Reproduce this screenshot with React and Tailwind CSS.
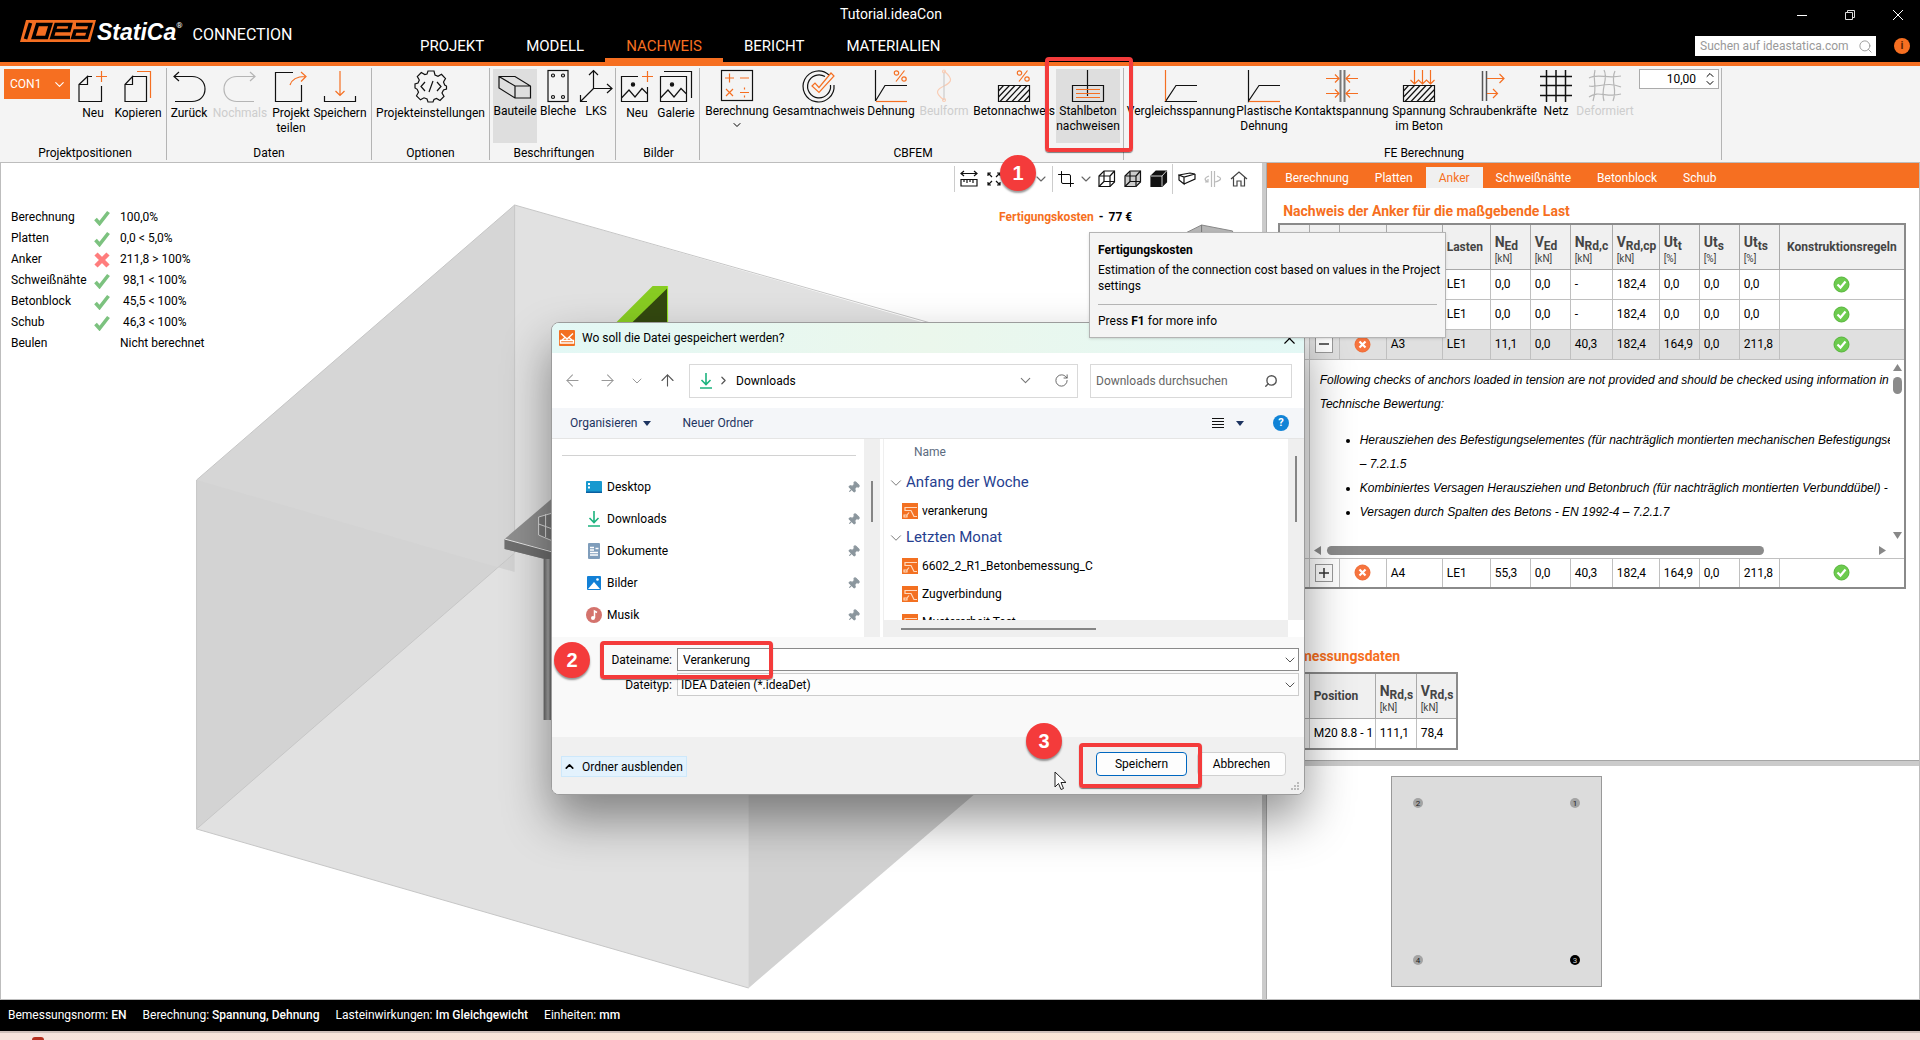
import { useState } from 'react'
import { ArrowLeft, ArrowRight, ArrowUp, ChevronDown, ChevronRight, ChevronUp, Crop, Pin, RotateCw, Search, X } from 'lucide-react'

const K = '#111'
const O = '#f56f22'
const G = '#b5b5b5'

function Svg({ children, color = K, size = 32, className = '' }) {
  return (
    <svg
      width={size}
      height={size}
      viewBox="0 0 32 32"
      fill="none"
      stroke={color}
      strokeWidth="1.2"
      className={`shrink-0 overflow-visible ${className}`}
      aria-hidden="true"
    >
      {children}
    </svg>
  )
}

const Percent = ({ x }) => (
  <g stroke={O} transform={`translate(${x} 0)`}>
    <circle cx="2.5" cy="3" r="2.2" />
    <circle cx="10" cy="9" r="2.2" />
    <path d="M10.500 .5L2 11.500" />
  </g>
)

const Hatch = () => (
  <g>
    <path d="M.5 15.500h31v16H.5z" />
    <path d="M.5 21l5-5.500M.5 27l11-11.500M2 31.500l15-16M8 31.500l15-16M14 31.500l15-16M20 31.500l11.500-12M26 31.500l5.500-6" />
  </g>
)

const icons = {
  newFile: (
    <Svg>
      <path d="M2 14.500L10.500 6.500V14.500H2V31.500H24.500V16M10.500 6.500H15" />
      <path d="M19 6.500H30M24.500 1V12" stroke={O} />
    </Svg>
  ),
  copy: (
    <Svg>
      <path d="M3 14.500L10.500 6.500V14.500H3V31.500H24.500V6.500H10.500" />
      <path d="M15 1.500H28.500V28" stroke={O} />
    </Svg>
  ),
  undo: (
    <Svg>
      <path d="M1 6.500H19C27 6.500 32 12 32 19S27 31.500 19 31.500H2M6 2L1 6.500L6 11" />
    </Svg>
  ),
  redo: (
    <Svg color={G}>
      <path d="M31 6.500H13C5 6.500 0 12 0 19S5 31.500 13 31.500H30M26 2L31 6.500L26 11" />
    </Svg>
  ),
  share: (
    <Svg>
      <path d="M18 2.500H.5V31.500H26.500V15" />
      <path d="M15 15C17 9 22 6.500 30 6.500M26 2L31 6.500L26 11.500" stroke={O} />
    </Svg>
  ),
  save: (
    <Svg>
      <path d="M.5 26V31.500H31.500V26" />
      <path d="M16 1V25M11.500 21L16 25.500L20.500 21" stroke={O} />
    </Svg>
  ),
  gear: (
    <Svg>
      <path d="M13 1h6l1 4 3 1.300 3.500-2 4 4.200-2 3.500 1.200 3L31.500 16v3l-3 1-1.500 3 2 3.500-4 4-3.500-2-2.500 1L18 32h-5l-1-3-3-1.200-3.500 2-4-4 2-3.500-1.300-3L0 18v-4l3-1 1.300-3-2-3.500 4-4 3.500 2L12 4z" />
      <path d="M10 12L6 16.500L10 21M22 12L26 16.500L22 21M18 11L14 22" />
    </Svg>
  ),
  beam: (
    <Svg>
      <path d="M0 6.500H16L31.500 16V28H16L0 18ZM0 6.500L16 16H31.500M16 16V28" />
    </Svg>
  ),
  plate: (
    <Svg>
      <rect x="6" y=".5" width="20" height="31" />
      <circle cx="11" cy="5.500" r="1.500" />
      <circle cx="21" cy="5.500" r="1.500" />
      <circle cx="11" cy="27" r="1.500" />
      <circle cx="21" cy="27" r="1.500" />
    </Svg>
  ),
  axes: (
    <Svg>
      <path d="M13.500 0V18.500H32M13.500 18.500L.5 31.500M9 5L13.500 .5L18 5M27 14L32 18.500L27 23M.5 25V31.500H7" />
    </Svg>
  ),
  imageNew: (
    <Svg>
      <path d="M17 6.500H.5V31.500H26.500V17M.5 28L8 20L14 27L21 18.500L26.500 24" />
      <circle cx="12" cy="14.500" r="1.600" fill={K} />
      <path d="M21 6.500H32M26.500 1V12" stroke={O} />
    </Svg>
  ),
  gallery: (
    <Svg>
      <path d="M.5 6.500H26.500V31.500H.5ZM.5 28L8 20L14 27L21 18.500L26.500 24M4 1.500H31.500V28" />
      <circle cx="12" cy="14.500" r="1.600" fill={K} />
    </Svg>
  ),
  calc: (
    <Svg>
      <rect x=".5" y=".5" width="31" height="30" />
      <path
        d="M4 8H13M8.500 3.500V12.500M19 8H28M5 19L12 26M12 19L5 26M19 22.500H28M23.500 17.500V19.500M23.500 25.500V27.500"
        stroke={O}
      />
    </Svg>
  ),
  overall: (
    <Svg>
      <path d="M26 5A15.500 15.500 0 1 0 31 15M22 6.500A11.500 11.500 0 1 0 27.500 15" />
      <path d="M9 16L12 13L16 17.500L28 3L31 6L16 22.500Z" stroke={O} />
    </Svg>
  ),
  strain: (
    <Svg>
      <path d="M.5 0V31M.5 31L10 15.500H32" />
      <path d="M1 31.500H32" stroke={O} />
      <Percent x={19} />
    </Svg>
  ),
  buckling: (
    <Svg color="#f9cdb5">
      <path d="M16 1C27 10 22 13 16 16S5 22 16 30" />
      <path d="M16 2V30" stroke="#ccc" />
      <circle cx="16" cy="1.500" r="1.500" />
      <circle cx="16" cy="30" r="1.500" />
    </Svg>
  ),
  concrete: (
    <Svg>
      <Hatch />
      <Percent x={19} />
    </Svg>
  ),
  reinforced: (
    <Svg>
      <path d="M.5 15.500H31.500V31.500H.5ZM15.500 0V26" />
      <path d="M4 19.500H28M4 23.500H28M4 27.500H28" stroke={O} />
    </Svg>
  ),
  stress: (
    <Svg>
      <path d="M32 31.500H.5L11 15.500H32" />
      <path d="M.5 0V31" stroke={O} />
    </Svg>
  ),
  plastic: (
    <Svg>
      <path d="M.5 0V31L11 15.500H32" />
      <path d="M1 31.500H32" stroke={O} />
    </Svg>
  ),
  contact: (
    <Svg>
      <path d="M14.500 0V32M18.500 0V32" stroke="#777" strokeWidth="2" />
      <path
        d="M0 8.500H13M9 4.500L13 8.500L9 12.500M0 23.500H13M9 19.500L13 23.500L9 27.500M32 8.500H20M24 4.500L20 8.500L24 12.500M32 23.500H20M24 19.500L20 23.500L24 27.500"
        stroke={O}
      />
    </Svg>
  ),
  concreteStress: (
    <Svg>
      <Hatch />
      <path d="M11.500 0V14M19.500 0V14M27.500 0V14M7.500 10L11.500 14L15.500 10L19.500 14L23.500 10L27.500 14L31.500 10" stroke={O} />
    </Svg>
  ),
  bolt: (
    <Svg>
      <path d="M5.500 1V31M9.500 1V31" stroke="#555" strokeWidth="1.500" />
      <path d="M10 8.500H27M22.500 4L27 8.500L22.500 13M10 23.500H20M16 19L20.500 23.500L16 28" stroke={O} />
    </Svg>
  ),
  mesh: (
    <Svg>
      <path d="M6.500 0V32M16 0V32M25.500 0V32M0 6.500H32M0 15.500H32M0 25.500H32" strokeWidth="1.500" />
    </Svg>
  ),
  deformed: (
    <Svg color={G}>
      <path d="M6 0C3 10 9 14 4 31M15 0C20 9 11 18 15 31M26 1C21 12 29 18 24 31M0 8C8 3 18 9 32 6M0 16C9 18 18 11 32 17M0 27C9 20 18 28 32 24" />
    </Svg>
  ),
}

const groups = [
  {
    name: 'Projektpositionen',
    className: 'w-[167px] pl-1',
    low: true,
    items: [
      { label: 'Neu', icon: 'newFile', w: 'w-[46px]' },
      { label: 'Kopieren', icon: 'copy', w: 'w-[44px]' },
    ],
  },
  {
    name: 'Daten',
    className: 'w-[205px]',
    low: true,
    items: [
      { label: 'Zurück', icon: 'undo', w: 'w-[44px]' },
      { label: 'Nochmals', icon: 'redo', w: 'w-[58px]', disabled: true },
      { label: 'Projekt teilen', icon: 'share', w: 'w-[44px]' },
      { label: 'Speichern', icon: 'save', w: 'w-[54px]' },
    ],
  },
  {
    name: 'Optionen',
    className: 'w-[118px]',
    low: true,
    items: [{ label: 'Projekteinstellungen', icon: 'gear', w: 'w-[117px]' }],
  },
  {
    name: 'Beschriftungen',
    className: 'w-[126px] pl-[3px]',
    items: [
      { label: 'Bauteile', icon: 'beam', w: 'w-[44px]', active: true },
      { label: 'Bleche', icon: 'plate', w: 'w-[42px]' },
      { label: 'LKS', icon: 'axes', w: 'w-[34px]' },
    ],
  },
  {
    name: 'Bilder',
    className: 'w-[84px] pl-[2px]',
    low: true,
    items: [
      { label: 'Neu', icon: 'imageNew', w: 'w-[38px]' },
      { label: 'Galerie', icon: 'gallery', w: 'w-[40px]' },
    ],
  },
  {
    name: 'CBFEM',
    className: 'w-[424px] pl-[3px]',
    items: [
      { label: 'Berechnung', icon: 'calc', w: 'w-[68px]', menu: true },
      { label: 'Gesamtnachweis', icon: 'overall', w: 'w-[95px]' },
      { label: 'Dehnung', icon: 'strain', w: 'w-[50px]' },
      { label: 'Beulform', icon: 'buckling', w: 'w-[56px]', disabled: true },
      { label: 'Betonnachweis', icon: 'concrete', w: 'w-[84px]' },
      { label: 'Stahlbeton nachweisen', icon: 'reinforced', w: 'w-[64px]', active: true },
    ],
  },
  {
    name: 'FE Berechnung',
    className: 'w-[598px] pl-[3px]',
    spinner: true,
    items: [
      { label: 'Vergleichsspannung', icon: 'stress', w: 'w-[108px]' },
      { label: 'Plastische Dehnung', icon: 'plastic', w: 'w-[58px]' },
      { label: 'Kontaktspannung', icon: 'contact', w: 'w-[97px]' },
      { label: 'Spannung im Beton', icon: 'concreteStress', w: 'w-[58px]' },
      { label: 'Schraubenkräfte', icon: 'bolt', w: 'w-[90px]' },
      { label: 'Netz', icon: 'mesh', w: 'w-[36px]' },
      { label: 'Deformiert', icon: 'deformed', w: 'w-[62px]', disabled: true },
    ],
  },
]

const labelLines = {
  'Projekt teilen': ['Projekt', 'teilen'],
  'Stahlbeton nachweisen': ['Stahlbeton', 'nachweisen'],
  'Plastische Dehnung': ['Plastische', 'Dehnung'],
  'Spannung im Beton': ['Spannung', 'im Beton'],
}

function RibbonItem({ item, low }) {
  return (
    <button
      disabled={item.disabled}
      className={`flex h-[74px] shrink-0 flex-col items-center pt-px ${item.w} ${item.active ? 'bg-[#dedede]' : ''} ${item.disabled ? 'text-[#cdcdcd]' : ''}`}
    >
      {icons[item.icon]}
      <span className={`text-center leading-[15px] whitespace-nowrap ${low ? 'mt-1' : 'mt-[2px]'}`}>
        {(labelLines[item.label] || [item.label]).map((line) => (
          <span key={line} className="block">{line}</span>
        ))}
      </span>
      {item.menu && <ChevronDown size={12} />}
    </button>
  )
}

function Ribbon() {
  return (
    <div className="flex h-[97px] border-b border-[#bdbdbd] bg-[#f4f4f4] pt-[2px]">
      {groups.map((g) => (
        <div key={g.name} className={`flex h-[92px] shrink-0 flex-col border-r border-[#b4b4b4] ${g.className}`}>
          <div className="flex flex-1 items-start pt-px">
            {g.name === 'Projektpositionen' && (
              <button className="flex h-[30px] w-[66px] shrink-0 items-center justify-between bg-[#f66f21] pr-[3px] pl-[6px] text-white">
                CON1 <ChevronDown size={15} strokeWidth={1.8} />
              </button>
            )}
            {g.items.map((item) => (
              <RibbonItem key={item.label} item={item} low={g.low} />
            ))}
            {g.spinner && (
              <div className="ml-[3px] flex h-5 w-20 items-center border border-[#ababab] bg-white pr-[2px]">
                <input aria-label="Skalierung" defaultValue="10,00" className="w-full min-w-0 pr-2 text-right outline-none" />
                <div className="flex flex-col">
                  <ChevronUp size={12} className="-mb-1" />
                  <ChevronDown size={12} />
                </div>
              </div>
            )}
          </div>
          <div className="text-center leading-[14px]">{g.name}</div>
        </div>
      ))}
    </div>
  )
}

function TopBar() {
  const [tab, setTab] = useState('NACHWEIS')
  return (
    <header className="flex h-[66px] justify-between border-b-4 border-[#f66f21] bg-black text-white">
      <div className="flex">
        <div className="flex w-[399px] items-start pt-[20px] pl-5">
          <svg width="76" height="22" viewBox="0 0 76 22" aria-label="IDEA">
            <path d="M6 0H76L70 22H0Z" fill={O} />
            <g fill="none" stroke="#000" strokeWidth="3.600">
              <path d="M10.500 3L5.500 19" />
              <path d="M17.500 4.500H30.500L26.500 17.500H13.500Z" />
              <path d="M50 17.500H32L36 4.500H50.500L49 10.500H35" />
              <path d="M56 4.500H70.500L66.500 17.500H53L55 11H68" />
            </g>
          </svg>
          <span className="pl-px font-['Liberation_Sans'] text-[23px] leading-[24px] font-bold italic">StatiCa</span>
          <span className="text-[8px] leading-[12px]">®</span>
          <span className="pt-[4px] pl-[10px] text-base leading-[22px]">CONNECTION</span>
        </div>
        <nav className="flex items-end">
          {['PROJEKT', 'MODELL', 'NACHWEIS', 'BERICHT', 'MATERIALIEN'].map((t) => (
            <button
              key={t}
              onClick={() => setTab(t)}
              className={`h-[28px] border-b-4 px-[21px] text-[15px] leading-[24px] ${t === tab ? 'border-[#f66f21] text-[#f66f21]' : 'border-transparent'}`}
            >
              {t}
            </button>
          ))}
        </nav>
      </div>
      <div className="flex flex-col items-end pr-[10px]">
        <div className="flex h-[36px] items-center gap-9 pr-[6px] pb-[6px]">
          <button aria-label="Minimieren" className="w-3">
            <svg width="12" height="12"><path d="M1 6.500H11" stroke="#fff" /></svg>
          </button>
          <button aria-label="Wiederherstellen">
            <svg width="12" height="12" fill="none" stroke="#ddd"><path d="M1.500 3.500h7v7h-7zM3.500 3V1.500h7v7H9" /></svg>
          </button>
          <button aria-label="Schließen">
            <svg width="12" height="12" stroke="#fff"><path d="M1 1l10 10M11 1L1 11" /></svg>
          </button>
        </div>
        <div className="flex items-center gap-[18px]">
          <div className="flex h-5 w-[181px] items-center bg-white pr-[3px] pl-[5px]">
            <input
              aria-label="Suchen"
              placeholder="Suchen auf ideastatica.com"
              className="w-full min-w-0 text-xs text-black outline-none placeholder:text-[#999]"
            />
            <Search size={15} color="#999" strokeWidth={1.5} className="shrink-0" />
          </div>
          <button className="flex size-4 items-center justify-center rounded-full bg-[#f66f21] text-[11px] font-bold text-[#5c2403]">i</button>
        </div>
      </div>
    </header>
  )
}

function Scene() {
  return (
    <svg viewBox="0 0 1262 836" preserveAspectRatio="xMidYMid slice" className="absolute inset-0 h-full w-full" aria-hidden="true">
      <defs>
        <linearGradient id="stud" x1="0" x2="1">
          <stop offset="0" stopColor="#666" />
          <stop offset=".5" stopColor="#aaa" />
          <stop offset="1" stopColor="#444" />
        </linearGradient>
      </defs>
      <path d="M514 42L196 317V666L514 390Z" fill="#d6d6d6" />
      <path d="M514 42L1064 192V540L748 825L196 666L514 390Z" fill="#e1e1e1" />
      <path d="M748 476V825L973 632V300Z" fill="#d2d2d2" />
      <path d="M196 317L514 409V390L196 666Z" fill="#d3d3d3" />
      <path d="M1262 0H1064V192L928 161L514 42Z" fill="#fff" />
      <path d="M973 632L1262 380V0H1064L1040 192Z" fill="#fff" />
      <path d="M196 317L514 42M514 42V390L196 666M196 317V666L748 825M514 42L930 160" fill="none" stroke="#c6c6c6" />
      <path d="M504 376L552 335V398L504 386Z" fill="#8e8e8e" />
      <path d="M504 376L552 388V398L504 386Z" fill="#6f6f6f" />
      <path d="M504 376L552 389" stroke="#e8e8e8" />
      <path d="M543 396H552V557H543Z" fill="url(#stud)" />
      <g fill="#777" stroke="#ddd">
        <path d="M538 354V372L552 378V350Z" />
        <path d="M538 361L552 366M545 351V374" />
      </g>
      <path d="M614 161L652 123H667V161Z" fill="#88cc22" />
      <path d="M630 161L667 125V161Z" fill="#33480f" />
      <path d="M667 123V161" stroke="#99ee22" />
      <path d="M1185 70L1201 62L1232 68V110H1185Z" fill="#b5b5b5" stroke="#888" />
      <path d="M1201 62V80" stroke="#777" />
    </svg>
  )
}

const checks = [
  ['Berechnung', 'ok', '100,0%'],
  ['Platten', 'ok', '0,0 < 5,0%'],
  ['Anker', 'bad', '211,8 > 100%'],
  ['Schweißnähte', 'ok', ' 98,1 < 100%'],
  ['Betonblock', 'ok', ' 45,5 < 100%'],
  ['Schub', 'ok', ' 46,3 < 100%'],
  ['Beulen', '', 'Nicht berechnet'],
]

function Cube({ fill }) {
  return (
    <svg width="18" height="18" viewBox="0 0 18 18" fill={fill} stroke="#111" strokeWidth="1.200" aria-hidden="true">
      <path d="M1 6L6 1H16.500V12L12 16.500H1Z" />
      {fill === '#111' ? <path d="M1 6H12V16.500M12 6L16.500 1" stroke="#fff" strokeWidth=".8" /> : <path d="M1 6H12V16.500M12 6L16.500 1M6 1V11.500H16.500M6 11.500L1 16.500" />}
    </svg>
  )
}

function ViewToolbar() {
  return (
    <div className="flex h-8 items-center pr-[10px]">
      <button aria-label="Messen" className="flex h-[26px] w-7 items-center justify-center border-l border-[#ccc]">
        <svg width="18" height="18" fill="none" stroke="#111" strokeWidth="1.200">
          <path d="M1 3.500H17M4 1L1 3.500L4 6M14 1L17 3.500L14 6M1 9.500H17V16H1ZM4 9.500V12M7 9.500V13M10 9.500V12M13 9.500V13" />
        </svg>
      </button>
      <button aria-label="Einpassen" className="flex w-6 justify-center">
        <svg width="14" height="14" fill="none" stroke="#111" strokeWidth="1.200">
          <path d="M1 4V1H4M1 1L5 5M13 4V1H10M13 1L9 5M1 10V13H4M1 13L5 9M13 10V13H10M13 13L9 9" />
        </svg>
      </button>
      <button aria-label="Ansicht" className="flex w-[46px] justify-end pr-[3px] text-[#666]"><ChevronDown size={16} strokeWidth={1.6} /></button>
      <button aria-label="Schnitt" className="flex h-[26px] w-[27px] items-center justify-center border-l border-[#ccc]">
        <Crop size={18} strokeWidth={1.3} />
      </button>
      <button aria-label="Schnittoptionen" className="flex w-[14px] justify-center text-[#666]"><ChevronDown size={16} strokeWidth={1.6} className="shrink-0" /></button>
      <button aria-label="Drahtmodell" className="flex w-[27px] justify-center"><Cube fill="none" /></button>
      <button aria-label="Transparent" className="flex w-[26px] justify-center"><Cube fill="#ccc" /></button>
      <button aria-label="Volumen" className="flex w-[26px] justify-center"><Cube fill="#111" /></button>
      <button aria-label="Perspektive" className="flex h-[30px] w-[28px] items-center justify-center border-l border-[#ccc]">
        <svg width="18" height="18" fill="none" stroke="#111" strokeWidth="1.200"><path d="M1 5L12 3L17 4L6 7ZM1 5V10L6 14V7M6 14L17 9V4" /></svg>
      </button>
      <button aria-label="Spiegeln" className="flex w-[26px] justify-center">
        <svg width="18" height="18" fill="none" stroke="#bbb" strokeWidth="1.200"><path d="M7.500 1V17M10.500 1V17M5 6C0 8 0 10 4 12M4 9V12H1M13 6C18 8 18 10 11 12" /></svg>
      </button>
      <button aria-label="Start" className="flex w-[26px] justify-center">
        <svg width="18" height="18" fill="none" stroke="#444" strokeWidth="1.200"><path d="M1 9L9 2L17 9M3.500 7.500V16H7V11H11V16H14.500V7.500" /></svg>
      </button>
    </div>
  )
}

function Viewport() {
  return (
    <section className="relative min-w-0 flex-1 border-l border-[#bdbdbd] bg-white">
      <Scene />
      <div className="relative flex flex-col">
        <div className="flex justify-end"><ViewToolbar /></div>
        <div className="flex items-start justify-between pt-[12px] pr-[130px] pl-[10px]">
          <table className="leading-[21px]">
            <tbody>
              {checks.map(([name, state, value]) => (
                <tr key={name} className="h-[21px]">
                  <th scope="row" className="w-[83px] p-0 text-left font-normal">{name}</th>
                  <td className="w-[26px] p-0">
                    {state === 'ok' && <svg width="16" height="16" fill="none" stroke="#7cc27f" strokeWidth="3.600"><path d="M1.500 9L5.500 13.500L14.500 2" /></svg>}
                    {state === 'bad' && <svg width="16" height="16" stroke="#ff7d7d" strokeWidth="4.500"><path d="M2 2L14 14M14 2L2 14" /></svg>}
                  </td>
                  <td className="p-0 whitespace-pre">{value}</td>
                </tr>
              ))}
            </tbody>
          </table>
          <div className="flex gap-[5px] font-bold leading-[21px]">
            <a href="#kosten" className="text-[#f66f21]">Fertigungskosten</a>
            <span>-</span>
            <span>77 €</span>
          </div>
        </div>
      </div>
    </section>
  )
}

function Status({ ok }) {
  return (
    <svg width="17" height="17" viewBox="0 0 17 17" className="mx-auto" fill="none" stroke="#fff" strokeWidth="2.200">
      <circle cx="8.500" cy="8.500" r="7.500" fill={ok ? '#6ccb4e' : '#f7743e'} stroke={ok ? '#57b53b' : '#ee6a33'} strokeWidth="1" />
      {ok ? <path d="M4.500 8.500L7.500 11.500L12.500 5.500" /> : <path d="M5.500 5.500L11.500 11.500M11.500 5.500L5.500 11.500" />}
    </svg>
  )
}

const cols = [
  ['N', 'Ed', '[kN]'],
  ['V', 'Ed', '[kN]'],
  ['N', 'Rd,c', '[kN]'],
  ['V', 'Rd,cp', '[kN]'],
  ['Ut', 't', '[%]'],
  ['Ut', 's', '[%]'],
  ['Ut', 'ts', '[%]'],
]

const anchors = [
  { name: 'A1', vals: ['0,0', '0,0', '-', '182,4', '0,0', '0,0', '0,0'], ok: true },
  { name: 'A2', vals: ['0,0', '0,0', '-', '182,4', '0,0', '0,0', '0,0'], ok: true },
  { name: 'A3', vals: ['11,1', '0,0', '40,3', '182,4', '164,9', '0,0', '211,8'], open: true },
  { name: 'A4', vals: ['55,3', '0,0', '40,3', '182,4', '164,9', '0,0', '211,8'] },
]

function ColHead({ col }) {
  const [sym, sub, unit] = col
  return (
    <th className="border border-[#a9a9a9] px-1 pt-[3px] text-left leading-[15px] whitespace-nowrap text-[#444]">
      <span className="text-sm">{sym}</span>
      <sub className="text-xs">{sub}</sub>
      <div className="pt-px text-[10px] leading-[12px] font-normal">{unit}</div>
    </th>
  )
}

function Detail() {
  return (
    <div className="flex h-[198px] flex-col bg-white">
      <div className="flex flex-1">
        <div className="h-[183px] w-0 flex-1 overflow-hidden pt-[8px] pl-[10px] font-['Liberation_Sans',sans-serif] leading-[24px] italic">
          <p className="whitespace-nowrap">Following checks of anchors loaded in tension are not provided and should be checked using information in</p>
          <p>Technische Bewertung:</p>
          <ul className="list-disc pt-3 pl-10 whitespace-nowrap">
            <li>
              Herausziehen des Befestigungselementes (für nachträglich montierten mechanischen Befestigungselementen)
              <br />– 7.2.1.5
            </li>
            <li>Kombiniertes Versagen Herausziehen und Betonbruch (für nachträglich montierten Verbunddübel) -</li>
            <li>Versagen durch Spalten des Betons - EN 1992-4 – 7.2.1.7</li>
          </ul>
        </div>
        <div className="flex w-[14px] flex-col items-center justify-between py-1">
          <div className="flex flex-col items-center gap-[6px]">
            <svg width="9" height="7" fill="#888"><path d="M0 7L4.500 0L9 7Z" /></svg>
            <div className="h-[17px] w-[9px] rounded-full bg-[#8b8b8b]" />
          </div>
          <svg width="9" height="7" fill="#888"><path d="M0 0L4.500 7L9 0Z" /></svg>
        </div>
      </div>
      <div className="flex h-[15px] items-center gap-[6px] pr-[18px] pl-1">
        <svg width="7" height="9" fill="#888"><path d="M7 0L0 4.500L7 9Z" /></svg>
        <div className="flex-1"><div className="h-[9px] w-4/5 rounded-full bg-[#8b8b8b]" /></div>
        <svg width="7" height="9" fill="#888"><path d="M0 0L7 4.500L0 9Z" /></svg>
      </div>
    </div>
  )
}

function AnchorTable() {
  return (
    <table className="w-full table-fixed border-collapse border-2 border-[#8a8a8a]">
      <colgroup>
        <col className="w-[30px]" />
        <col className="w-[30px]" />
        <col className="w-[47px]" />
        <col className="w-[56px]" />
        <col className="w-[48px]" />
        <col className="w-[40px]" />
        <col className="w-[40px]" />
        <col className="w-[42px]" />
        <col className="w-[47px]" />
        <col className="w-[40px]" />
        <col className="w-[40px]" />
        <col className="w-[40px]" />
        <col />
      </colgroup>
      <thead>
        <tr className="h-[45px] bg-[#f0f0f0]">
          <th className="border border-[#a9a9a9]" />
          <th className="border border-[#a9a9a9]" />
          <th className="border border-[#a9a9a9]" />
          <th className="border border-[#a9a9a9]" />
          <th className="border border-[#a9a9a9] px-1 text-left text-[#444]">Lasten</th>
          {cols.map((c) => <ColHead key={c[0] + c[1]} col={c} />)}
          <th className="border border-[#a9a9a9] px-1 text-center whitespace-nowrap text-[#444]">Konstruktionsregeln</th>
        </tr>
      </thead>
      {anchors.map((a) => (
        <tbody key={a.name}>
          <tr className={`h-[30px] ${a.open ? 'bg-[#e0e0e0]' : 'bg-white'}`}>
            <td className="border border-[#c0c0c0] bg-[#f0f0f0]" />
            <td className="border border-[#c0c0c0]">
              <button aria-label="Details" className="mx-auto flex size-[18px] items-center justify-center border border-[#999] bg-white text-[#333]">
                <svg width="12" height="12" stroke="#333" strokeWidth="1.500">
                  <path d={a.open ? 'M1 6H11' : 'M1 6H11M6 1V11'} />
                </svg>
              </button>
            </td>
            <td className="border border-[#c0c0c0]"><Status ok={a.ok} /></td>
            <td className="border border-[#c0c0c0] px-1">{a.name}</td>
            <td className="border border-[#c0c0c0] px-1">LE1</td>
            {a.vals.map((v, i) => <td key={i} className="border border-[#c0c0c0] px-1">{v}</td>)}
            <td className="border border-[#c0c0c0]"><Status ok /></td>
          </tr>
          {a.open && (
            <tr>
              <td className="border border-[#c0c0c0] bg-[#f0f0f0]" />
              <td colSpan={12} className="p-0"><Detail /></td>
            </tr>
          )}
        </tbody>
      ))}
    </table>
  )
}

function PlateMap() {
  const pins = [[26, 27, '2'], [183, 27, '1'], [26, 184, '4'], [183, 184, '3']]
  return (
    <svg width="211" height="212" viewBox="0 0 211 212" className="shrink-0">
      <rect x=".5" y=".5" width="210" height="210" fill="#dcdcdc" stroke="#999" />
      {pins.map(([x, y, n]) => (
        <g key={n}>
          <circle cx={x + 1} cy={y} r="5" fill={n === '3' ? '#000' : '#a3a3a3'} />
          <text x={x + 1} y={y + 3} textAnchor="middle" fontSize="8" fill={n === '3' ? '#ccc' : '#222'}>{n}</text>
        </g>
      ))}
    </svg>
  )
}

function ResultPanel() {
  const [tab, setTab] = useState('Anker')
  return (
    <aside className="flex w-[34%] shrink-0 flex-col border-r border-[#bdbdbd] bg-white">
      <div className="flex h-[25px] items-end bg-[#f66f21] pl-[5px]">
        {['Berechnung', 'Platten', 'Anker', 'Schweißnähte', 'Betonblock', 'Schub'].map((t) => (
          <button
            key={t}
            onClick={() => setTab(t)}
            className={`h-[21px] px-[13px] ${t === tab ? 'bg-[#f0f0f0] text-[#f66f21]' : 'text-white'}`}
          >
            {t}
          </button>
        ))}
      </div>
      <div className="flex flex-col pr-[13px] pl-[11px]">
        <h2 className="pt-[13px] pb-[2px] pl-[5px] text-sm leading-[20px] font-bold text-[#f66f21]">Nachweis der Anker für die maßgebende Last</h2>
        <AnchorTable />
        <h2 className="pt-[57px] pb-[6px] pl-[5px] text-sm leading-[20px] font-bold text-[#f66f21]">Bemessungsdaten</h2>
        <table className="w-[178px] table-fixed border-collapse border-2 border-[#8a8a8a]">
          <colgroup>
            <col className="w-[30px]" />
            <col className="w-[66px]" />
            <col className="w-[41px]" />
            <col className="w-[41px]" />
          </colgroup>
          <thead>
            <tr className="h-[45px] bg-[#f0f0f0]">
              <th className="border border-[#a9a9a9]" />
              <th className="border border-[#a9a9a9] px-1 text-left text-[#444]">Position</th>
              <ColHead col={['N', 'Rd,s', '[kN]']} />
              <ColHead col={['V', 'Rd,s', '[kN]']} />
            </tr>
          </thead>
          <tbody>
            <tr className="h-[31px]">
              <td className="border border-[#c0c0c0] bg-[#f0f0f0]" />
              <td className="border border-[#c0c0c0] pl-1 whitespace-nowrap">M20 8.8 - 1</td>
              <td className="border border-[#c0c0c0] px-1">111,1</td>
              <td className="border border-[#c0c0c0] px-1">78,4</td>
            </tr>
          </tbody>
        </table>
      </div>
      <div className="mt-[10px] h-[6px] border-t border-[#a5a5a5] bg-[#cbcbcb]" />
      <div className="flex flex-1 pt-[10px] pl-[124px]"><PlateMap /></div>
    </aside>
  )
}

function FileIcon() {
  return (
    <svg width="16" height="16" viewBox="0 0 16 16" className="shrink-0">
      <path d="M0 0H16V16H0Z" fill="#f37021" />
      <path d="M15 4.500H3V7.500H9L12 13.500H15M2 12H5V14H2ZM5 12L7 9.500" fill="none" stroke="#ffd9bd" strokeWidth="1.200" />
    </svg>
  )
}

const places = [
  {
    name: 'Desktop',
    icon: <svg width="16" height="16"><rect y="2" width="16" height="12" rx="1" fill="#1799cf" /><path d="M2 4h2v2H2zM2 7.500h2v2H2z" fill="#fff" /><path d="M0 12.500H16V14H0z" fill="#0a5fa0" /></svg>,
  },
  {
    name: 'Downloads',
    icon: <svg width="16" height="16" fill="none" stroke="#1cb37e" strokeWidth="1.600"><path d="M8 0V11M3.500 7L8 11.500L12.500 7M2 15H14" /></svg>,
  },
  {
    name: 'Dokumente',
    icon: <svg width="16" height="16"><rect x="2" width="12" height="16" rx="1" fill="#7f9dbb" /><path d="M4 4.500h4M4 7h4M4 9.500h8M4 12h8M9.500 5.500h3" stroke="#fff" strokeWidth="1.300" /></svg>,
  },
  {
    name: 'Bilder',
    icon: <svg width="16" height="16"><rect x="1" y="1" width="14" height="14" rx="1" fill="#1280d6" /><path d="M2 14L8 7L14 14Z" fill="#fff" /><circle cx="11.500" cy="4.500" r="1.300" fill="#fff" /></svg>,
  },
  {
    name: 'Musik',
    icon: <svg width="16" height="16"><circle cx="8" cy="8" r="8" fill="#d4736d" /><path d="M8.500 11V4L11 5.500" fill="none" stroke="#fff" strokeWidth="1.500" /><circle cx="7" cy="11" r="2" fill="#fff" /></svg>,
  },
]

function FileGroup({ title, files }) {
  return (
    <div>
      <div className="flex h-[27px] items-center gap-px pb-[2px] pl-[3px] text-[15px] text-[#26408f]">
        <ChevronDown size={18} color="#777" strokeWidth={1.3} />
        {title}
      </div>
      {files.map((f) => (
        <div key={f} className="flex h-7 items-center gap-1 pl-[18px]">
          <FileIcon />
          {f}
        </div>
      ))}
    </div>
  )
}

function SaveDialog() {
  return (
    <div
      role="dialog"
      aria-label="Wo soll die Datei gespeichert werden?"
      className="absolute top-[322px] left-[551px] flex w-[754px] flex-col overflow-hidden rounded-lg border border-[#9c9c9c] bg-white shadow-[0_24px_48px_rgba(0,0,0,0.42)]"
    >
      <div className="flex h-[30px] items-center justify-between bg-gradient-to-r from-[#e3f8f5] via-[#ebf7ec] to-[#e3f8f5] pr-[5px] pl-[7px]">
        <div className="flex items-center gap-[7px]">
          <svg width="16" height="16" viewBox="0 0 16 16">
            <rect width="16" height="16" rx="1" fill="#f37021" />
            <path d="M2 3.500L8 9L14 3.500M2.500 10.500L6 7.500M13.500 10.500L10 7.500M1.500 13V10.500H14.500V13Z" fill="none" stroke="#fff" strokeWidth="1.300" />
          </svg>
          Wo soll die Datei gespeichert werden?
        </div>
        <button aria-label="Schließen"><X size={19} strokeWidth={1.4} /></button>
      </div>
      <div className="flex h-[55px] items-center pr-3 pl-[11px] text-[#555]">
        <div className="flex w-[126px] items-center">
          <button aria-label="Zurück" className="w-[35px] text-[#999]"><ArrowLeft size={19} strokeWidth={1.3} /></button>
          <button aria-label="Vorwärts" className="w-[31px] text-[#999]"><ArrowRight size={19} strokeWidth={1.3} /></button>
          <button aria-label="Verlauf" className="w-[29px] text-[#999]"><ChevronDown size={16} strokeWidth={1.5} /></button>
          <button aria-label="Nach oben"><ArrowUp size={19} strokeWidth={1.4} /></button>
        </div>
        <div className="flex h-[34px] flex-1 items-center border border-[#d9d9d9] px-[8px]">
          {places[1].icon}
          <ChevronRight size={13} strokeWidth={2.2} className="ml-[3px]" />
          <span className="flex-1 pl-[6px] text-black">Downloads</span>
          <ChevronDown size={17} strokeWidth={1.5} className="mr-5 text-[#777]" />
          <RotateCw size={15} strokeWidth={1.4} />
        </div>
        <div className="ml-3 flex h-[34px] w-[202px] items-center border border-[#d9d9d9] pr-[13px] pl-[5px]">
          <input aria-label="Downloads durchsuchen" placeholder="Downloads durchsuchen" className="w-full min-w-0 outline-none placeholder:text-[#666]" />
          <Search size={14} strokeWidth={2.4} className="shrink-0 -scale-x-100" />
        </div>
      </div>
      <div className="flex h-[31px] items-center justify-between border-b border-[#e5e5e5] bg-[#f4f6f9] pr-[15px] pl-[18px] text-[#1d3461]">
        <div className="flex items-center gap-[31px]">
          <button className="flex items-center gap-[6px]">
            Organisieren
            <svg width="8" height="5" fill="#1d3461"><path d="M0 0H8L4 5Z" /></svg>
          </button>
          <button>Neuer Ordner</button>
        </div>
        <div className="flex items-center">
          <button aria-label="Ansicht" className="flex items-center gap-3">
            <svg width="12" height="12" stroke="#111"><path d="M0 1.500H12M0 4.500H12M0 7.500H12M0 10.500H12" /></svg>
            <svg width="8" height="5" fill="#1d3461"><path d="M0 0H8L4 5Z" /></svg>
          </button>
          <button className="ml-[29px] flex size-4 items-center justify-center rounded-full bg-[#1183d6] text-[11px] font-bold text-white">?</button>
        </div>
      </div>
      <div className="flex h-[198px]">
        <ul className="w-[312px] pt-4 pr-1 pl-[10px]">
          <li className="mr-1 h-4 border-t border-[#d2d2d2]" />
          {places.map((p) => (
            <li key={p.name} className="flex h-8 items-center pl-6">
              {p.icon}
              <span className="flex-1 pl-[5px]">{p.name}</span>
              <Pin size={13} color="#8b969d" fill="#8b969d" className="rotate-45" />
            </li>
          ))}
        </ul>
        <div className="w-4 bg-[#efefef] pt-[42px] pl-[7px]"><div className="h-[41px] w-[2px] bg-[#858585]" /></div>
        <div className="ml-[3px] flex flex-1 flex-col border-l border-[#efefef]">
          <div className="flex h-[181px]">
            <div className="flex-1 overflow-hidden">
              <div className="h-[31px] pl-[30px] leading-[26px] text-[#5b6b80]">Name</div>
              <FileGroup title="Anfang der Woche" files={['verankerung']} />
              <FileGroup title="Letzten Monat" files={['6602_2_R1_Betonbemessung_C', 'Zugverbindung', 'Musterarbeit Test']} />
            </div>
            <div className="w-4 bg-[#efefef] pt-[17px] pl-[7px]"><div className="h-[66px] w-[2px] bg-[#858585]" /></div>
          </div>
          <div className="mr-4 flex h-[17px] items-center bg-[#efefef] pl-[17px]"><div className="h-[2px] w-[195px] bg-[#858585]" /></div>
        </div>
      </div>
      <div className="flex h-[100px] flex-col gap-[2px] bg-[#f9f9f9] pt-[11px] pr-[5px]">
        <div className="flex items-center">
          <label htmlFor="fname" className="w-[125px] pr-[5px] text-right">Dateiname:</label>
          <div className="flex h-[23px] flex-1 items-center border border-[#8a8a8a] bg-white">
            <input id="fname" defaultValue="Verankerung" className="w-full min-w-0 pl-[5px] outline-none" />
            <ChevronDown size={16} strokeWidth={1.5} className="shrink-0 text-[#555]" />
          </div>
        </div>
        <div className="flex items-center">
          <label htmlFor="ftype" className="w-[125px] pr-[5px] text-right">Dateityp:</label>
          <div className="flex h-[23px] flex-1 items-center border border-[#ccc] bg-[#fdfdfd]">
            <select id="ftype" className="w-full min-w-0 appearance-none pl-[3px] outline-none">
              <option>IDEA Dateien (*.ideaDet)</option>
            </select>
            <ChevronDown size={16} strokeWidth={1.5} className="shrink-0 text-[#555]" />
          </div>
        </div>
      </div>
      <div className="flex h-[57px] items-start justify-between bg-[#f0f0f0] pt-[15px] pr-[18px] pl-[9px]">
        <button className="mt-1 flex h-[21px] w-[126px] items-center gap-[6px] border border-[#cde8fb] bg-[#e3f2fd] pl-px">
          <ChevronUp size={13} strokeWidth={3} />
          Ordner ausblenden
        </button>
        <div className="flex gap-[10px]">
          <button className="h-6 w-[91px] rounded border border-[#0067c0] bg-[#fdfdfd]">Speichern</button>
          <button className="h-6 w-[89px] rounded border border-[#d0d0d0] bg-[#fdfdfd]">Abbrechen</button>
        </div>
      </div>
      <svg width="10" height="10" fill="#bbb" className="absolute right-[3px] bottom-[2px]">
        <path d="M6 0h2v2H6zM6 3h2v2H6zM3 3h2v2H3zM6 6h2v2H6zM3 6h2v2H3zM0 6h2v2H0z" />
      </svg>
    </div>
  )
}

function Tooltip() {
  return (
    <div role="tooltip" className="absolute top-[232px] left-[1089px] w-[357px] border border-[#b4b4b4] bg-[#f4f4f4] px-2 pt-[9px] pb-2 leading-[16px] shadow-sm">
      <p className="pb-1 font-bold">Fertigungskosten</p>
      <p className="-mr-2 pb-[10px]">Estimation of the connection cost based on values in the Project settings</p>
      <hr className="border-[#b4b4b4]" />
      <p className="pt-2">Press <b>F1</b> for more info</p>
    </div>
  )
}

const badge = "absolute flex size-9 items-center justify-center rounded-full bg-[#f43b3b] font-['Liberation_Sans'] text-xl font-bold text-white shadow-[0_2px_2px_rgba(0,0,0,0.4)]"
const frame = 'pointer-events-none absolute rounded border-4 border-[#f43b3b] shadow-[0_1px_1px_rgba(0,0,0,0.5)]'

function Steps() {
  return (
    <>
      <div className={`${frame} top-[57px] left-[1045px] h-[95px] w-[88px]`} />
      <div className={`${badge} top-[155px] left-[1000px]`}>1</div>
      <div className={`${frame} top-[641px] left-[600px] h-[38px] w-[173px]`} />
      <div className={`${badge} top-[642px] left-[554px]`}>2</div>
      <div className={`${frame} top-[743px] left-[1079px] h-[45px] w-[123px]`} />
      <div className={`${badge} top-[723px] left-[1026px]`}>3</div>
      <svg width="13" height="20" viewBox="0 0 13 20" className="absolute top-[771px] left-[1054px]">
        <path d="M1 1V16L4.500 12.500L7 18.500L9.500 17.500L7 11.500H12Z" fill="#fff" stroke="#222" />
      </svg>
    </>
  )
}

const info = [
  ['Bemessungsnorm:', 'EN'],
  ['Berechnung:', 'Spannung, Dehnung'],
  ['Lasteinwirkungen:', 'Im Gleichgewicht'],
  ['Einheiten:', 'mm'],
]

export default function App() {
  return (
    <div className="relative flex min-h-screen flex-col overflow-hidden bg-white font-['Roboto','Noto_Sans',sans-serif] text-xs text-black">
      <TopBar />
      <div className="absolute inset-x-0 top-[5px] text-center">
        <h1 className="pr-[138px] text-sm leading-[18px] text-white">Tutorial.ideaCon</h1>
      </div>
      <Ribbon />
      <main className="flex flex-1">
        <Viewport />
        <div className="w-[5px] border-r border-[#aaa] bg-[#cbcbcb]" />
        <ResultPanel />
      </main>
      <footer>
        <div className="flex h-8 items-center gap-4 border-t border-[#bdbdbd] bg-black px-2 pb-[2px] text-white">
          {info.map(([k, v]) => (
            <span key={k}>{k} <span className="font-medium">{v}</span></span>
          ))}
        </div>
        <div className="flex h-[9px] items-end border-t-2 border-[#cfc0ba] bg-gradient-to-r from-[#f6e3dc] via-[#fbe6d6] to-[#f3e1dc] pl-8">
          <div className="h-[3px] w-3 rounded-t-full bg-[#b5301f]" />
        </div>
      </footer>
      <SaveDialog />
      <Tooltip />
      <Steps />
    </div>
  )
}
